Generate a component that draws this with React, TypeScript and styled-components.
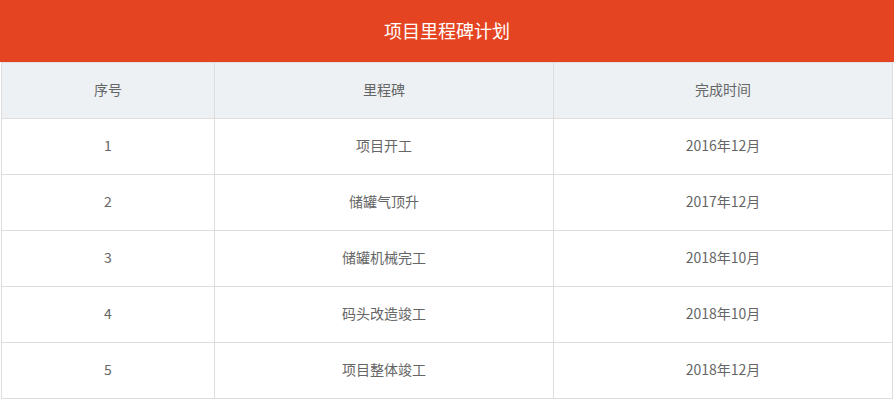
import React from "react";
import styled, { createGlobalStyle } from "styled-components";

const rows = [
  { no: "1", name: "项目开工", date: "2016年12月" },
  { no: "2", name: "储罐气顶升", date: "2017年12月" },
  { no: "3", name: "储罐机械完工", date: "2018年10月" },
  { no: "4", name: "码头改造竣工", date: "2018年10月" },
  { no: "5", name: "项目整体竣工", date: "2018年12月" },
];

function App() {
  return (
    <>
      <GlobalStyle />
      <Page>
        <Title>项目里程碑计划</Title>
        <Table>
          <Cell $head>序号</Cell>
          <Cell $head>里程碑</Cell>
          <Cell $head>完成时间</Cell>
          {rows.map((row) => (
            <React.Fragment key={row.no}>
              <Cell>{row.no}</Cell>
              <Cell>{row.name}</Cell>
              <Cell>{row.date}</Cell>
            </React.Fragment>
          ))}
        </Table>
      </Page>
    </>
  );
}

export default App;

const GlobalStyle = createGlobalStyle`
  body {
    margin: 0;
    background: #ffffff;
    font-family: "Microsoft YaHei", "Noto Sans CJK SC", "Noto Sans", sans-serif;
  }
`;

const Page = styled.div`
  width: 894px;
  display: flex;
  flex-direction: column;
`;

const Title = styled.div`
  height: 62px;
  box-sizing: border-box;
  padding-bottom: 2px;
  background: #e44421;
  color: #ffffff;
  font-size: 18px;
  display: flex;
  align-items: center;
  justify-content: center;
`;

const Table = styled.div`
  margin-left: 1px;
  width: 892px;
  box-sizing: border-box;
  display: grid;
  grid-template-columns: 213px 339px 339px;
  grid-auto-rows: 56px;
  border-left: 1px solid #dddddd;
  border-top: 1px solid #dde1e4;
`;

const Cell = styled.div<{ $head?: boolean }>`
  box-sizing: border-box;
  padding-bottom: 3px;
  display: flex;
  align-items: center;
  justify-content: center;
  border-right: 1px solid #dddddd;
  border-bottom: 1px solid #dddddd;
  background: ${(p) => (p.$head ? "#edf1f4" : "#ffffff")};
  color: #666666;
  font-size: 14px;
`;
